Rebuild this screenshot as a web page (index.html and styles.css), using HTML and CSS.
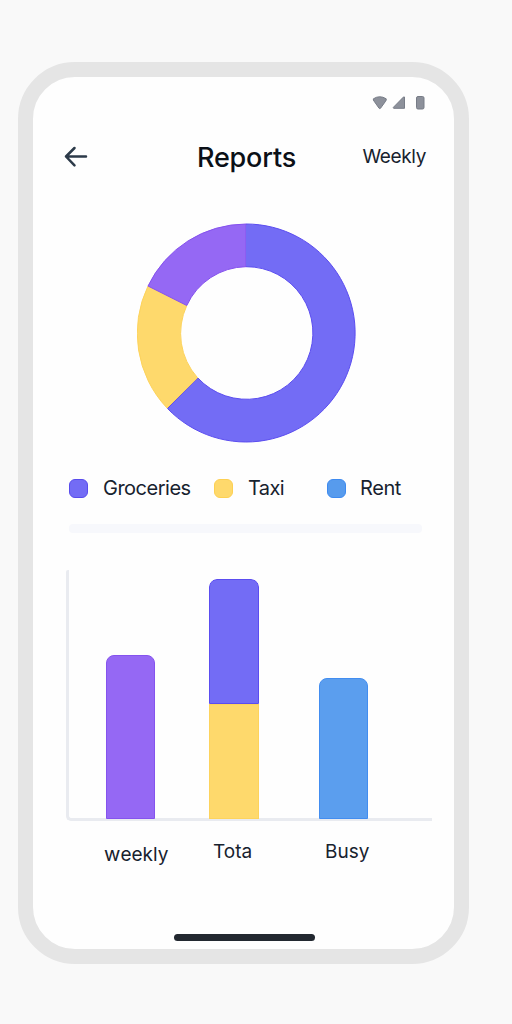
FILE: index.html
```html
<!DOCTYPE html>
<html lang="en">
<head>
<meta charset="utf-8">
<title>Reports</title>
<link rel="stylesheet" href="styles.css">
</head>
<body>
<main class="phone">
  <div class="status">
    <svg width="54" height="16" viewBox="0 0 54 16" fill="#8d919b" stroke="#777c87" stroke-width="1" stroke-linejoin="round">
      <path d="M1.4 3.8Q7.7-.3 14.2 3.8Q14.5 5 13.6 6.2L8.5 13.3Q7.8 14 7.1 13.3L2.1 6.2Q1 5 1.4 3.8Z"/>
      <path d="M32.5 2V13.3H21.6Q21 12.8 21.5 12.2L31.4 2.1Q32 1.5 32.5 2Z"/>
      <rect x="44.5" y="1.5" width="7.5" height="12.5" rx="1.5"/>
    </svg>
  </div>
  <header class="header">
    <svg class="back" width="24" height="22" viewBox="0 0 24 22" fill="none" stroke="#2c3a49" stroke-width="2.5" stroke-linecap="round" stroke-linejoin="round">
      <path d="M22 10.5H2M10.5 2L2 10.5L10.5 19.3"/>
    </svg>
    <h1 class="title">Reports</h1>
    <span class="period">Weekly</span>
  </header>
  <svg class="donut" width="220" height="220" viewBox="-109.5 -110 220 220" stroke-width="1">
    <path fill="#736cf5" stroke="#5b4df0" d="M-.5-109A109 109 0 1 1-79 75.5L-48.6 45A66.3 66.3 0 1 0-.5-66.3Z"/>
    <path fill="#fed96c" stroke="#fdd35c" d="M-79.5 75A109 109 0 0 1-98.5-47L-59.7-27.5A66.3 66.3 0 0 0-49 44.7Z"/>
    <path fill="#9568f4" stroke="#8552ee" d="M-98.5-47A109 109 0 0 1-.5-109V-66.3A66.3 66.3 0 0 0-59.7-27.5Z"/>
    <path stroke="#736cf5" d="M0-108V-67"/>
  </svg>
  <div class="legend">
    <span class="key"><i class="swatch indigo"></i><span class="groceries">Groceries</span></span>
    <span class="key"><i class="swatch yellow"></i><span class="taxi">Taxi</span></span>
    <span class="key"><i class="swatch blue"></i><span class="rent">Rent</span></span>
  </div>
  <div class="divider"></div>
  <section class="chart">
    <div class="bar bar-weekly"></div>
    <div class="bar bar-total"><div class="segment indigo"></div><div class="segment yellow"></div></div>
    <div class="bar bar-busy"></div>
  </section>
  <div class="labels">
    <span class="label-weekly"><span class="initial">w</span>eekly</span>
    <span class="label-total">Tota</span>
    <span class="label-busy">Busy</span>
  </div>
  <div class="home"></div>
</main>
</body>
</html>
```

FILE: styles.css
```css
* { box-sizing: border-box; }
body {
  margin: 0;
  height: 1024px;
  padding: 62px 0 0 18px;
  background: #f9f9f9;
  color: #17222e;
  font: 20px/24px Inter, "Liberation Sans", sans-serif;
}
.phone {
  display: flex;
  flex-direction: column;
  width: 451px;
  height: 902px;
  border: 15px solid #e5e5e5;
  border-radius: 57px;
  background: #fefefe;
}
.status {
  display: flex;
  justify-content: flex-end;
  height: 64px;
  padding: 18px 28px 0 0;
}
.header {
  display: grid;
  grid-template-columns: 133px 160px 1fr;
  align-items: center;
  height: 34px;
  padding: 0 27px 0 31px;
}
.back { margin-bottom: 3px; }
.title {
  margin: 0;
  color: #0b1017;
  font-size: 27px;
  line-height: 32px;
  font-weight: 500;
  letter-spacing: -0.2px;
}
.period {
  margin: 0 1px 3px 0;
  justify-self: end;
  font-size: 19px;
  letter-spacing: -0.35px;
}
.donut { margin: 48px 0 0 104px; }
.legend {
  display: grid;
  grid-template-columns: 145px 113px 1fr;
  height: 24px;
  margin: 33px 0 0 36px;
  letter-spacing: -0.5px;
}
.taxi, .rent { letter-spacing: -0.4px; }
.taxi { letter-spacing: -0.6px; }
.rent { margin-left: -1px; }
.key { display: flex; align-items: center; gap: 15px; }
.swatch {
  width: 19px;
  height: 19px;
  border: 1px solid;
  border-radius: 6px;
}
.indigo { background: #736cf5; border-color: #594ced; }
.yellow { background: #fed96c; border-color: #fdd052; }
.blue { background: #579bed; border-color: #3d8af0; }
.divider {
  width: 353px;
  height: 9px;
  margin: 24px 0 0 35.5px;
  border-radius: 4px;
  background: #f7f8fc;
}
.chart {
  display: flex;
  align-items: flex-end;
  width: 366px;
  height: 251px;
  margin: 37px 0 0 33px;
  padding-left: 37px;
  border-left: 3px solid #e9ebf0;
  border-bottom: 3px solid #e9ebf0;
  border-radius: 2px 0 0 5px;
}
.bar {
  margin-bottom: -1px;
  border-radius: 8px 8px 0 0;
}
.bar-weekly {
  width: 48.5px;
  height: 164px;
  margin-right: 54.5px;
  border: 1px solid #8553ee;
  background: #9568f4;
}
.bar-total {
  width: 50px;
  height: 240px;
  margin-right: 60px;
  overflow: hidden;
}
.segment { height: 115px; border: 1px solid; }
.segment.indigo { height: 125px; border-color: #5b4df0; border-radius: 8px 8px 0 0; }
.segment.yellow { border-color: #fdd35c; }
.bar-busy {
  width: 49px;
  height: 141px;
  border: 1px solid #428df0;
  background: #5b9eee;
}
.labels {
  display: grid;
  grid-template-columns: 109px 112px 1fr;
  align-items: start;
  margin: 19px 0 0 71px;
  font-size: 19px;
}
.label-weekly { padding-top: 3px; }
.initial { font-size: 20px; line-height: 0; }
.home {
  width: 141px;
  height: 7px;
  margin: auto 0 8px 141px;
  border-radius: 4px;
  background: #222830;
}
```
